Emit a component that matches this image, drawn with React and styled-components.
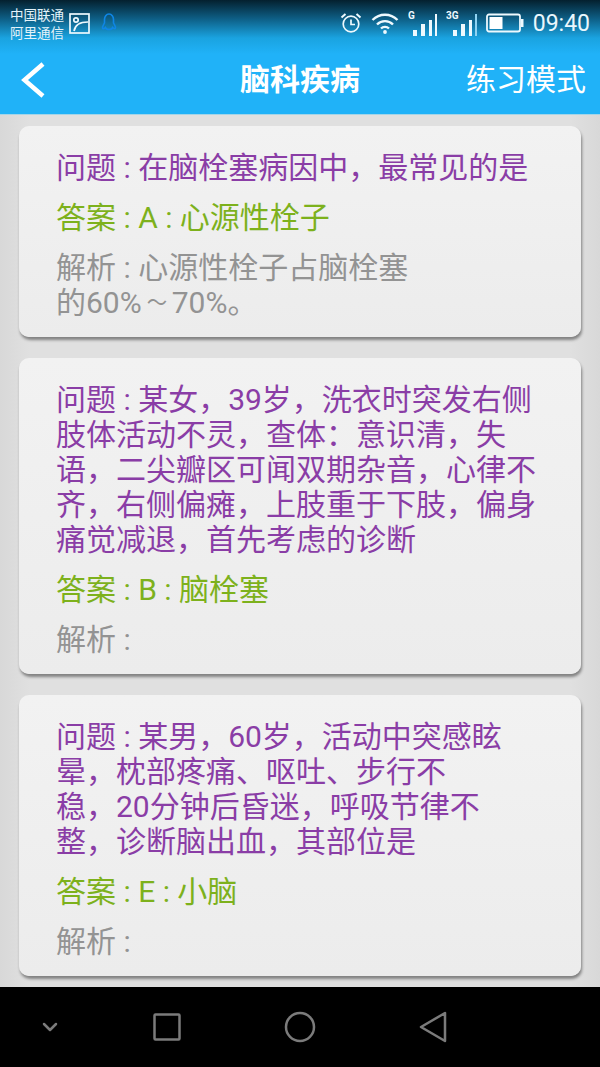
import React from "react";
import styled, { createGlobalStyle } from "styled-components";

const CJK = `Roboto, "Noto Sans CJK SC", sans-serif`;

const GlobalStyle = createGlobalStyle`
    html, body {
        margin: 0;
        padding: 0;
        background: #dcdcdc;
    }
`;

const Screen = styled.div`
    width: 600px;
    height: 1067px;
    display: flex;
    flex-direction: column;
    overflow: hidden;
    background: linear-gradient(90deg, #d8d8d8 0, #e0e0e0 30px, #e0e0e0 570px, #d8d8d8 100%);
    font-family: ${CJK};
`;

const TopArea = styled.header`
    height: 114px;
    flex: none;
    background: linear-gradient(180deg, #04202e 0, #0d5c82 18px, #1aa3e0 38px, #20b2f8 54px, #20b2f8 100%);
    border-bottom: 1px solid #a5d5e8;
    box-sizing: content-box;
    display: flex;
    flex-direction: column;
`;

const StatusBar = styled.div`
    height: 46px;
    display: flex;
    align-items: center;
    justify-content: space-between;
    padding: 0 10px;
`;

const StatusGroup = styled.div`
    display: flex;
    align-items: center;
    gap: ${(p) => p.$gap}px;
`;

const Carrier = styled.div`
    color: #e4f3fa;
    font-size: 13.5px;
    line-height: 18px;
    width: 49px;
    margin-top: 1px;
    white-space: nowrap;
`;

const Clock = styled.span`
    color: #eaf7fd;
    font-size: 23px;
`;

const NavBar = styled.nav`
    flex: 1;
    display: flex;
    align-items: center;
    justify-content: space-between;
    padding: 0 14px 0 20px;
    position: relative;
    color: #fff;
`;

const NavTitle = styled.h1`
    position: absolute;
    left: 0;
    right: 0;
    margin: 0;
    text-align: center;
    font-size: 30px;
    font-weight: 700;
    line-height: 40px;
    pointer-events: none;
`;

const NavAction = styled.span`
    font-size: 30px;
    line-height: 40px;
    font-weight: 400;
`;

const CardList = styled.main`
    flex: 1;
    display: flex;
    flex-direction: column;
    gap: 21px;
    padding: 11px 19px 0;
`;

const Card = styled.article`
    background: linear-gradient(180deg, #f2f2f2, #ececec);
    border-radius: 10px;
    box-shadow: 1px 3px 3px rgba(0, 0, 0, 0.42);
    padding: 24px 37px 17px;
    display: flex;
    flex-direction: column;
    gap: 15px;
`;

const Row = styled.p`
    margin: 0;
    font-size: 30px;
    line-height: 35px;
    white-space: nowrap;
    color: ${(p) => p.$color};
`;

const Tilde = styled.span`
    display: inline-block;
    transform: scale(0.68, 0.8);
`;

const BottomBar = styled.footer`
    height: 80px;
    flex: none;
    background: #000;
    display: grid;
    grid-template-columns: 100px 133px 133px 134px;
    align-items: center;
    justify-items: center;
`;

const cards = [
    {
        q: ["问题 : 在脑栓塞病因中，最常见的是"],
        a: "答案 : A : 心源性栓子",
        e: [
            "解析 : 心源性栓子占脑栓塞",
            <>
                的60%<Tilde>～</Tilde>70%。
            </>,
        ],
    },
    {
        q: [
            "问题 : 某女，39岁，洗衣时突发右侧",
            "肢体活动不灵，查体：意识清，失",
            "语，二尖瓣区可闻双期杂音，心律不",
            "齐，右侧偏瘫，上肢重于下肢，偏身",
            "痛觉减退，首先考虑的诊断",
        ],
        a: "答案 : B : 脑栓塞",
        e: ["解析 :"],
    },
    {
        q: [
            "问题 : 某男，60岁，活动中突感眩",
            "晕，枕部疼痛、呕吐、步行不",
            "稳，20分钟后昏迷，呼吸节律不",
            "整，诊断脑出血，其部位是",
        ],
        a: "答案 : E : 小脑",
        e: ["解析 :"],
    },
];

const Lines = ({ lines, color }) => (
    <Row $color={color}>
        {lines.map((line, i) => (
            <React.Fragment key={i}>
                {i > 0 && <br />}
                {line}
            </React.Fragment>
        ))}
    </Row>
);

const PictureIcon = () => (
    <svg width="21" height="21" viewBox="0 0 21 21" fill="none" stroke="#eef9fe" strokeWidth="1.7">
        <rect x="1" y="1" width="19" height="19" />
        <circle cx="7" cy="7" r="2.2" />
        <path d="M5 18c1-6 6-9 14-9" />
    </svg>
);

const PenguinIcon = () => (
    <svg width="18" height="22" viewBox="0 0 20 24" fill="none" stroke="#0f86e6" strokeWidth="1.8">
        <path d="M5 12V8c0-3 2-6 5-6s5 3 5 6v4c1 2 3 4 2 6-1 1-2 0-3-1-1 3-7 3-8 0-1 1-2 2-3 1-1-2 1-4 2-6z" />
    </svg>
);

const AlarmIcon = () => (
    <svg width="22" height="22" viewBox="0 0 22 22" fill="none" stroke="#eef9fe" strokeWidth="1.7">
        <circle cx="11" cy="12" r="7.8" />
        <path d="M11 7.5V12.5H15" />
        <path d="M1.5 5.5L5.5 2M20.5 5.5L16.5 2" strokeWidth="2" />
    </svg>
);

const WifiIcon = () => (
    <svg width="28" height="22" viewBox="0 0 28 22" fill="none" stroke="#eef9fe" strokeWidth="2.4">
        <path d="M1.5 8C8.5 1 19.5 1 26.5 8" />
        <path d="M6 12.5c4.5-4.5 11.5-4.5 16 0" />
        <path d="M10 16.5c2.2-2.2 5.8-2.2 8 0" />
        <circle cx="14" cy="20" r="1.9" fill="#eef9fe" stroke="none" />
    </svg>
);

const Signal = ({ label, dimLast, width }) => (
    <svg width={width} height="26" viewBox={`0 0 ${width} 26`}>
        <text x="0" y="9" fontSize="10" fontWeight="700" fontFamily="Roboto, sans-serif" fill="#eef9fe">
            {label}
        </text>
        <g fill="#eef9fe">
            <rect x={width - 24} y="20" width="4" height="6" />
            <rect x={width - 16} y="14" width="4" height="12" />
            <rect x={width - 8} y="10" width="3" height="16" />
        </g>
        <rect x={width - 2} y="4" width="2" height="22" fill={dimLast ? "#8fd3f2" : "#eef9fe"} />
    </svg>
);

const BatteryIcon = () => (
    <svg width="38" height="20" viewBox="0 0 38 20">
        <rect x="1" y="1.5" width="33" height="17" rx="2" fill="none" stroke="#eef9fe" strokeWidth="1.8" />
        <rect x="3.5" y="4" width="13" height="12" fill="#fff" />
        <rect x="35" y="6" width="2.5" height="8" fill="#eef9fe" />
    </svg>
);

const BackIcon = () => (
    <svg width="26" height="36" viewBox="0 0 26 36" fill="none" stroke="#fff" strokeWidth="4.5">
        <path d="M23 2L4.5 18L23 34" />
    </svg>
);

const NavKey = styled.svg`
    fill: none;
    stroke: #7b7b7b;
    stroke-width: 2.5;
    stroke-linejoin: round;
    stroke-linecap: round;
`;

const App = () => (
    <Screen>
        <GlobalStyle />
        <TopArea>
            <StatusBar>
                <StatusGroup $gap={10}>
                    <Carrier>
                        中国联通
                        <br />
                        阿里通信
                    </Carrier>
                    <PictureIcon />
                    <PenguinIcon />
                </StatusGroup>
                <StatusGroup $gap={9}>
                    <AlarmIcon />
                    <WifiIcon />
                    <Signal label="G" width="29" />
                    <Signal label="3G" dimLast width="31" />
                    <BatteryIcon />
                    <Clock>09:40</Clock>
                </StatusGroup>
            </StatusBar>
            <NavBar>
                <BackIcon />
                <NavTitle>脑科疾病</NavTitle>
                <NavAction>练习模式</NavAction>
            </NavBar>
        </TopArea>
        <CardList>
            {cards.map((card, i) => (
                <Card key={i}>
                    <Lines lines={card.q} color="#8a3da6" />
                    <Lines lines={[card.a]} color="#7db11c" />
                    <Lines lines={card.e} color="#939393" />
                </Card>
            ))}
        </CardList>
        <BottomBar>
            <NavKey width="16" height="12" viewBox="0 0 16 12">
                <path d="M2 3L8 9L14 3" />
            </NavKey>
            <NavKey width="30" height="30" viewBox="0 0 30 30">
                <rect x="2.5" y="2.5" width="25" height="25" rx="1" />
            </NavKey>
            <NavKey width="32" height="32" viewBox="0 0 32 32">
                <circle cx="16" cy="16" r="14" />
            </NavKey>
            <NavKey width="30" height="32" viewBox="0 0 30 32">
                <path d="M3 16L27 2V30Z" />
            </NavKey>
        </BottomBar>
    </Screen>
);

export default App;
